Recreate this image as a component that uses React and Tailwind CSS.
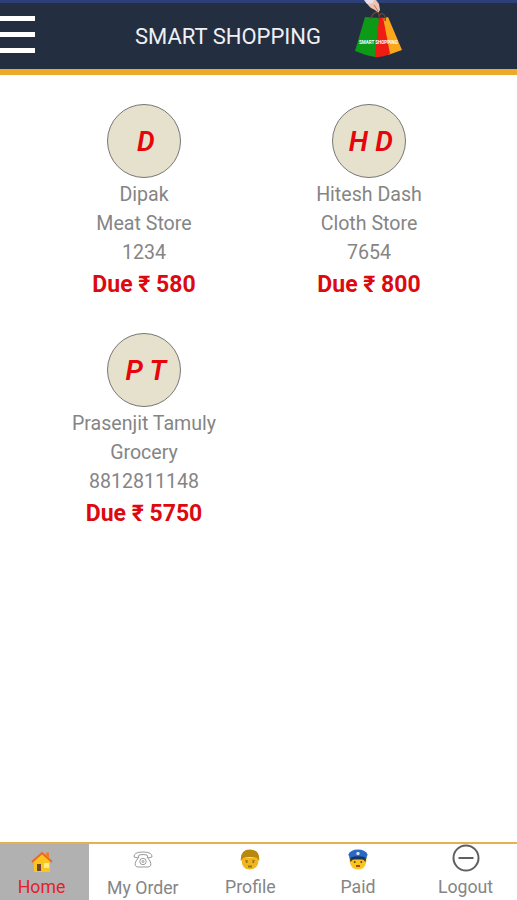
import React from 'react';

const customers = [
  { initials: 'D', name: 'Dipak', store: 'Meat Store', phone: '1234', due: 580 },
  { initials: 'H D', name: 'Hitesh Dash', store: 'Cloth Store', phone: '7654', due: 800 },
  { initials: 'P T', name: 'Prasenjit Tamuly', store: 'Grocery', phone: '8812811148', due: 5750 },
];

const BagLogo = () => (
  <svg className="w-[50px] h-[62px] overflow-visible" viewBox="0 0 50 62">
    <path d="M11 0 L22 0 L25 4 L26 10 L24 13 L21 10 L17 8 L14 5 Z" fill="#ecc3ae" />
    <path d="M10 0 L20 0 L19 3 L13 4 Z" fill="#e8dfea" />
    <path d="M20 5 L24 11" stroke="#b87660" strokeWidth="1" />
    <path d="M27 19 L34 17 L48 50 L34 55 Z" fill="#fba71b" />
    <path d="M23 19 L29 17 L36 54 Q28 58 20 57 Z" fill="#ee1c12" />
    <path d="M11 17 L25 18 L21 57 Q10 55 1 51 Z" fill="#0c9a17" />
    <path d="M17 19 Q18 13 23 12 Q26 14 25 20 M25 18 Q26 12 29 14 Q32 16 31 21" fill="none" stroke="#6b4235" strokeWidth="1.3" />
    <text x="5" y="43.5" fontSize="4.5" fontWeight="700" fill="#fff">SMART SHOPPING</text>
  </svg>
);

const HomeIcon = () => (
  <svg className="w-[22px] h-[22px]" viewBox="0 0 22 22">
    <path d="M3 10 L11 3 L19 10 V21 H3 Z" fill="#fbc520" />
    <path d="M15 4 V1.5 H18 V7 Z" fill="#e98120" />
    <path d="M1 11 L11 2 L21 11" fill="none" stroke="#f2661f" strokeWidth="2" />
    <rect x="6" y="13" width="4" height="7" fill="#71462b" />
    <rect x="13" y="12" width="5" height="5" fill="#ffea83" />
  </svg>
);

const PhoneIcon = () => (
  <svg className="w-[20px] h-[17px]" viewBox="0 0 20 17" fill="none" stroke="#9b9b9b" strokeWidth="1">
    <path d="M1 6 Q0.500 1 10 1 Q19.500 1 19 6 L15 7 L14 4 Q10 3 6 4 L5 7 Z" />
    <path d="M6 6 L3 10 Q0.500 15.500 5 16 H15 Q19.500 15.500 17 10 L14 6" />
    <circle cx="10" cy="10.500" r="3.200" />
    <circle cx="10" cy="10.500" r="1" />
  </svg>
);

const ProfileIcon = () => (
  <svg className="w-[20px] h-[21px]" viewBox="0 0 20 21">
    <path d="M1.500 9 Q1 20.500 10 20.500 Q19 20.500 18.500 9 Z" fill="#f0b622" />
    <path d="M0.800 12 Q0 0.500 10 0.500 Q20 0.500 19.200 12 L17 9 Q10 7.500 3 9 Z" fill="#b8870b" />
    <path d="M5 11.500 H8 M12 11.500 H15" stroke="#b8850f" />
    <circle cx="6.700" cy="13" r="1" fill="#8d6815" />
    <circle cx="13.300" cy="13" r="1" fill="#8d6815" />
    <path d="M8 17.500 H12" fill="none" stroke="#98751a" strokeWidth="2" />
  </svg>
);

const PoliceIcon = () => (
  <svg className="w-[20px] h-[21px]" viewBox="0 0 20 21">
    <path d="M1.500 9 Q1.500 20.500 10 20.500 Q18.500 20.500 18.500 9 Z" fill="#fbc51f" />
    <path d="M1.500 8 H18.500 L17.500 13 L15 10.500 H5 L2.500 13 Z" fill="#55391d" />
    <path d="M0.300 5.500 Q3 0.500 10 0.500 Q17 0.500 19.700 5.500 L18 9.500 H2 Z" fill="#2968c4" />
    <path d="M2.500 8.500 Q10 6 17.500 8.500 L16 10.500 Q10 9 4 10.500 Z" fill="#17345f" />
    <circle cx="10" cy="4.500" r="1.700" fill="#d6e1ec" />
    <circle cx="6.700" cy="13" r="1" fill="#604013" />
    <circle cx="13.300" cy="13" r="1" fill="#604013" />
    <path d="M8 17 H12" fill="none" stroke="#a04b18" strokeWidth="2" />
  </svg>
);

const LogoutIcon = () => (
  <svg className="w-[28px] h-[28px] -mt-1" viewBox="0 0 28 28" fill="none" stroke="#606060" strokeWidth="2">
    <circle cx="14" cy="14" r="12.500" />
    <path d="M6.500 14 H21.500" />
  </svg>
);

const CustomerCard = ({ customer }) => (
  <div className="h-[229px] flex flex-col items-center text-[19.600px] leading-[29px] text-[#858585] whitespace-nowrap">
    <div className="w-[74px] h-[74px] shrink-0 mb-[2px] pl-1 rounded-full border-[1.5px] border-[#777] bg-[#e5e1cd] flex items-center justify-center text-[28px] font-semibold italic tracking-[0.3px] text-[#e6050b]">
      {customer.initials}
    </div>
    <p>{customer.name}</p>
    <p>{customer.store}</p>
    <p>{customer.phone}</p>
    <p className="text-[23px] leading-[36px] font-bold text-[#dc0a10]">Due ₹ {customer.due}</p>
  </div>
);

const NavItem = ({ icon, label, low }) => (
  <button className={`w-[107.600px] shrink-0 flex flex-col items-center text-[17.700px] text-[#858585] ${low ? 'pt-[2px]' : ''}`}>
    <span className={`flex items-center justify-center ${low ? 'h-[29px] mb-[4px]' : 'h-[31px]'}`}>{icon}</span>
    <span className="leading-[24px]">{label}</span>
  </button>
);

const App = () => {
  return (
    <div className="h-[900px] w-full flex flex-col overflow-hidden bg-white font-[Roboto,sans-serif]">
      {/* Header */}
      <header className="h-[75px] shrink-0 flex border-t-[3px] border-t-[#2c4077] border-b-[6px] border-b-[#ecaa2c] bg-[#232f40]">
        <button className="w-[35px] pt-[13px] flex flex-col gap-[11px]">
          <span className="w-full h-[5px] bg-white" />
          <span className="w-full h-[5px] bg-white" />
          <span className="w-full h-[5px] bg-white" />
        </button>
        <h1 className="w-[185px] ml-[100px] pt-[18px] text-[22px] leading-[32px] text-[#eef0f4] whitespace-nowrap">SMART SHOPPING</h1>
        <div className="ml-[34px] -mt-[3px]">
          <BagLogo />
        </div>
      </header>

      {/* Customers */}
      <main className="flex-1 pt-[29px] pl-[31.500px]">
        <div className="grid grid-cols-[225px_225px]">
          {customers.map((customer) => (
            <CustomerCard key={customer.name} customer={customer} />
          ))}
        </div>
      </main>

      {/* Bottom navigation */}
      <nav className="h-[58px] shrink-0 flex border-t-2 border-[#e5b04d]">
        <button className="w-[89px] shrink-0 pr-[6px] bg-[#b1b1b1] flex flex-col items-center text-[17.700px] text-[#e3212b]">
          <span className="h-[31px] pt-1 flex items-center"><HomeIcon /></span>
          <span className="leading-[24px]">Home</span>
        </button>
        <NavItem icon={<PhoneIcon />} label="My Order" low />
        <NavItem icon={<ProfileIcon />} label="Profile" />
        <NavItem icon={<PoliceIcon />} label="Paid" />
        <NavItem icon={<LogoutIcon />} label="Logout" />
      </nav>
    </div>
  );
};

export default App;
